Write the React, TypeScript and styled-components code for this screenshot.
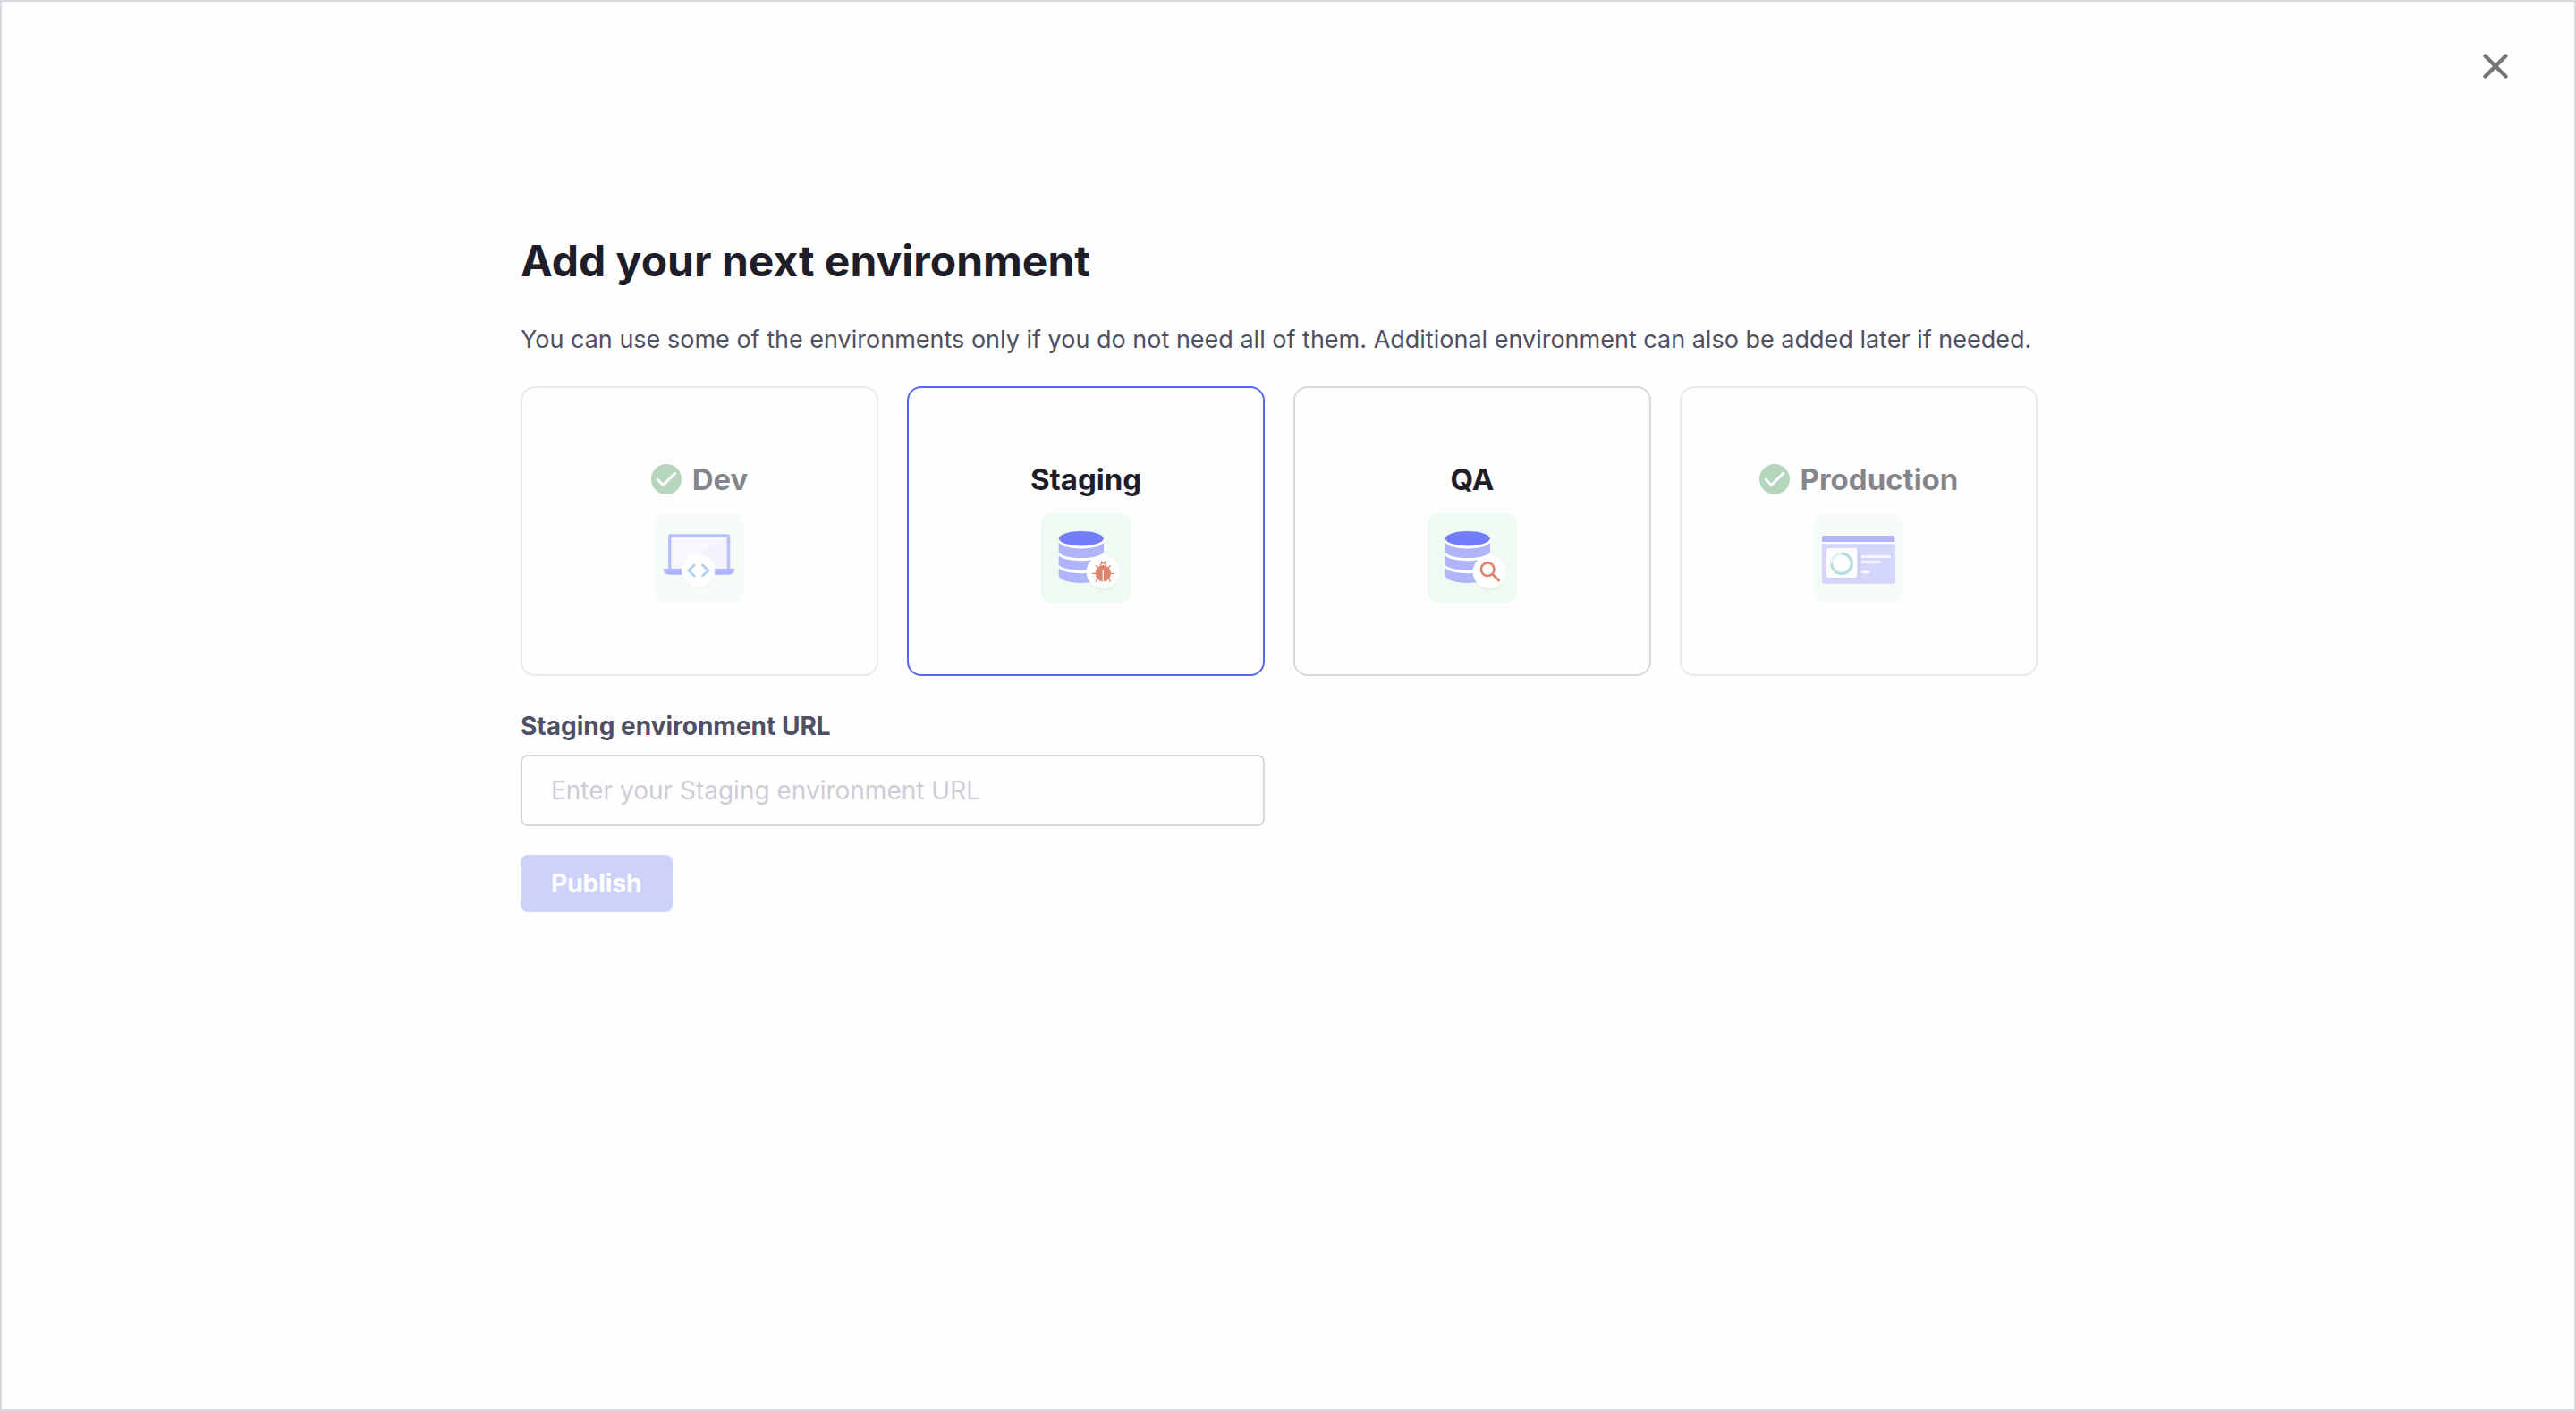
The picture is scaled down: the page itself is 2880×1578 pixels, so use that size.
import React, { useState } from "react";
import styled, { createGlobalStyle } from "styled-components";

const GlobalStyle = createGlobalStyle`
  *, *::before, *::after { box-sizing: border-box; }
  body {
    margin: 0;
    background: #fefefe;
    color: #1e1e2b;
    font-family: Inter, "Liberation Sans", sans-serif;
  }
  button, input { font: inherit; }
`;

const Dialog = styled.main`
  min-height: 100vh;
  display: flex;
  flex-direction: column;
  border: 2px solid #d8d8e0;
`;

const TopBar = styled.header`
  display: flex;
  justify-content: flex-end;
  padding: 48px 64px 0;
`;

const CloseButton = styled.button`
  display: flex;
  padding: 0;
  border: 0;
  background: none;
  color: #757575;
  cursor: pointer;
`;

const Content = styled.section`
  width: 100%;
  max-width: 1716px;
  margin: 0 auto;
  padding: 162px 0 64px;
`;

const Title = styled.h1`
  margin: 0 0 36px;
  font-size: 48px;
  line-height: 64px;
  font-weight: 700;
`;

const Description = styled.p`
  margin: 0 0 32px;
  color: #505064;
  font-size: 27px;
  line-height: 40px;
`;

const Options = styled.div`
  display: flex;
  flex-wrap: wrap;
  gap: 32px;
`;

const Option = styled.button<{ $selected: boolean }>`
  width: 400px;
  height: 324px;
  display: flex;
  flex-direction: column;
  align-items: center;
  justify-content: center;
  gap: 16px;
  padding: 0;
  border: 2px solid ${(p) => (p.$selected ? "#5966ee" : "#d8d8e0")};
  border-radius: 16px;
  background: transparent;
  color: #1e1e2b;
  cursor: pointer;

  &:disabled {
    opacity: 0.54;
    cursor: default;
  }
`;

const OptionTitle = styled.span`
  display: flex;
  align-items: center;
  gap: 12px;
  font-size: 33px;
  line-height: 44px;
  font-weight: 700;
`;

const Form = styled.form`
  display: flex;
  flex-direction: column;
  align-items: flex-start;
  margin-top: 36px;
`;

const Label = styled.label`
  margin-bottom: 12px;
  color: #505064;
  font-size: 28px;
  line-height: 40px;
  font-weight: 700;
`;

const UrlInput = styled.input`
  width: 100%;
  max-width: 832px;
  height: 80px;
  margin-bottom: 32px;
  padding: 0 32px;
  border: 2px solid #d8d8e0;
  border-radius: 8px;
  background: transparent;
  color: #1e1e2b;
  font-size: 28px;

  &::placeholder {
    color: #cdcdd7;
    opacity: 1;
  }
`;

const PublishButton = styled.button`
  height: 64px;
  padding: 0 32px;
  border: 2px solid #5966ee;
  border-radius: 8px;
  background: #5966ee;
  color: #ffffff;
  font-size: 28px;
  font-weight: 700;

  &:disabled {
    border-color: #cdd2fb;
    background: #cdd2fb;
  }
`;

const CloseIcon = () => (
  <svg width="48" height="48" viewBox="0 0 48 48" aria-hidden="true">
    <path d="M12.5 12.5 35.5 35.5M35.5 12.5 12.5 35.5" stroke="currentColor" strokeWidth="4.4" strokeLinecap="round" />
  </svg>
);

const CheckIcon = () => (
  <svg width="34" height="34" viewBox="0 0 34 34" aria-hidden="true">
    <circle cx="17" cy="17" r="17" fill="#78b586" />
    <path d="m6.5 16.5 7 7L27.5 9.5" fill="none" stroke="#fff" strokeWidth="3" />
  </svg>
);

const Tile = ({ children }: { children: React.ReactNode }) => (
  <svg width="100" height="100" viewBox="0 0 100 100" fill="none" aria-hidden="true">
    <rect width="100" height="100" rx="12" fill="#eefaf2" />
    {children}
  </svg>
);

const Disc = ({ cx, cy }: { cx: number; cy: number }) => (
  <>
    <circle cx={cx} cy={cy + 2} r="18.7" fill="#1e1e2b" fillOpacity="0.03" />
    <circle cx={cx} cy={cy + 1} r="18.7" fill="#1e1e2b" fillOpacity="0.03" />
    <circle cx={cx} cy={cy} r="18.7" fill="#fff" />
  </>
);

const LaptopArt = () => (
  <Tile>
    <path d="M15 62V26.3a3 3 0 0 1 3-3h48.300H81.300a3 3 0 0 1 3 3V62Z" fill="#868df8" />
    <path d="M18.7 27H80.7V62H18.7Z" fill="#eae9fd" />
    <path d="M18.7 27H80.7L18.7 61Z" fill="#f4f4fe" />
    <path d="M9.7 62h79.6c0 4-3 6.7-6.5 6.7H16.2c-3.5 0-6.5-2.7-6.5-6.7Z" fill="#6c74f9" />
    <Disc cx={48.7} cy={64} />
    <path d="m45 57.3-7.3 6.7 7.3 6.7M52.7 57.3 60 64l-7.3 6.7" stroke="#6ba8ec" strokeWidth="2.6" />
  </Tile>
);

const DatabaseArt = ({ children }: { children: React.ReactNode }) => (
  <Tile>
    <path d="M19.7 29h50.3v40a25.15 7 0 0 1-50.3 0Z" fill="#fff" />
    <path d="M19.7 32.8c4 4.6 14 6.7 25.15 6.7S66 37.4 70 32.8V43.5c-3 4.6-14 6.5-25.15 6.5S22.5 48.1 19.7 43.5Z" fill="#b0b5fb" />
    <path d="M19.7 47.3c4 4.1 14 5.9 25.15 5.9S66 51.4 70 47.3V57.8c-3 4-14 5.9-25.15 5.9S22.5 61.8 19.7 57.8Z" fill="#b0b5fb" />
    <path d="M19.7 61.3c4 4 14 5.9 25.15 5.9S66 65.3 70 61.3V70c-2 5.2-13 8-25.15 8S21.5 75.2 19.7 70Z" fill="#b0b5fb" />
    <ellipse cx="44.8" cy="28.2" rx="25" ry="8.2" fill="#727ef9" />
    <Disc cx={69.3} cy={65.7} />
    {children}
  </Tile>
);

const BugArt = () => (
  <DatabaseArt>
    <g stroke="#e0836d" strokeWidth="1.3">
      <path d="M57 67.3h5M76.7 67.3h5M61 58.3l3.5 3.7M77.7 58.3 74.2 62M61 76.7l2.5-4.5M77.7 76.7l-2.5-4.5" />
      <path d="M67.2 53.2l1 2.3M71.5 53.2l-1 2.3" />
      <path d="M66.3 58.5c0-4 6-4 6 0" />
    </g>
    <ellipse cx="69.3" cy="67.2" rx="8.7" ry="9.2" fill="#e0836d" />
    <path d="M69.3 63.7v13" stroke="#fff" strokeWidth="1.2" />
  </DatabaseArt>
);

const SearchArt = () => (
  <DatabaseArt>
    <circle cx="67.2" cy="62.7" r="7.3" stroke="#e0836d" strokeWidth="2.6" />
    <path d="m72.5 68 8 8" stroke="#e0836d" strokeWidth="3" />
  </DatabaseArt>
);

const DashboardArt = () => (
  <Tile>
    <rect x="9" y="30" width="81.6" height="8" fill="#fff" />
    <path d="M9 32V27a2 2 0 0 1 2-2h77.3a2 2 0 0 1 2 2v5Z" fill="#6c74f8" />
    <path d="M9 34.3h82V76.7a2 2 0 0 1-2 2H11a2 2 0 0 1-2-2Z" fill="#b3b6fb" />
    <rect x="17" y="42" width="34" height="32.5" rx="3" fill="#a8abf5" />
    <rect x="14" y="39" width="34.3" height="33" rx="3" fill="#fff" />
    <circle cx="31" cy="56.3" r="11.2" stroke="#c5e8ec" strokeWidth="3" />
    <path d="M31 45.1a11.2 11.2 0 1 1-11.2 11.2" stroke="#7dc2c7" strokeWidth="3" />
    <path d="M54.3 48.5H84.5M54.3 54.6H73.5M54.3 65.7H61" stroke="#f0f1fe" strokeWidth="3" strokeLinecap="round" />
  </Tile>
);

const environments = [
  { name: "Dev", added: true, Art: LaptopArt },
  { name: "Staging", added: false, Art: BugArt },
  { name: "QA", added: false, Art: SearchArt },
  { name: "Production", added: true, Art: DashboardArt },
];

export default function App() {
  const [selected, setSelected] = useState("Staging");
  const [url, setUrl] = useState("");

  return (
    <>
      <GlobalStyle />
      <Dialog>
        <TopBar>
          <CloseButton type="button" aria-label="Close">
            <CloseIcon />
          </CloseButton>
        </TopBar>
        <Content>
          <Title>Add your next environment</Title>
          <Description>
            You can use some of the environments only if you do not need all of them. Additional environment can also be
            added later if needed.
          </Description>
          <Options>
            {environments.map(({ name, added, Art }) => (
              <Option
                key={name}
                type="button"
                disabled={added}
                $selected={selected === name}
                aria-pressed={selected === name}
                onClick={() => setSelected(name)}
              >
                <OptionTitle>
                  {added && <CheckIcon />}
                  {name}
                </OptionTitle>
                <Art />
              </Option>
            ))}
          </Options>
          <Form onSubmit={(e) => e.preventDefault()}>
            <Label htmlFor="environment-url">{selected} environment URL</Label>
            <UrlInput
              id="environment-url"
              value={url}
              onChange={(e) => setUrl(e.target.value)}
              placeholder={`Enter your ${selected} environment URL`}
            />
            <PublishButton type="submit" disabled={!url}>
              Publish
            </PublishButton>
          </Form>
        </Content>
      </Dialog>
    </>
  );
}
